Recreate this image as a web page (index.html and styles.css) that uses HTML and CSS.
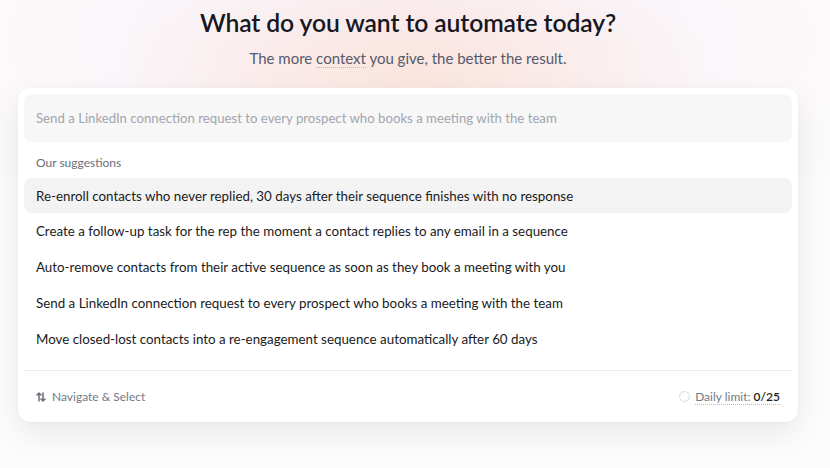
FILE: index.html
```html
<!DOCTYPE html>
<html lang="en">
<head>
	<meta charset="UTF-8">
	<title>Automations</title>
	<link rel="stylesheet" href="styles.css">
</head>
<body>
	<div class="page">
		<header class="hero">
			<h1>What do you want to automate today?</h1>
			<p>The more <span class="dotted">context</span> you give, the better the result.</p>
		</header>

		<section class="box">
			<div class="prompt">Send a LinkedIn connection request to every prospect who books a meeting with the team</div>

			<div class="label">Our suggestions</div>
			<ul class="list">
				<li class="item active">Re-enroll contacts who never replied, 30 days after their sequence finishes with no response</li>
				<li class="item">Create a follow-up task for the rep the moment a contact replies to any email in a sequence</li>
				<li class="item">Auto-remove contacts from their active sequence as soon as they book a meeting with you</li>
				<li class="item">Send a LinkedIn connection request to every prospect who books a meeting with the team</li>
				<li class="item">Move closed-lost contacts into a re-engagement sequence automatically after 60 days</li>
			</ul>

			<footer class="foot">
				<span class="hint">
					<svg width="10" height="10" viewBox="0 0 10 10" fill="none" stroke="currentColor" stroke-width="1.5" stroke-linecap="round" stroke-linejoin="round">
						<path d="M3 9V1M1 3l2-2 2 2"/>
						<path d="M7 1v8M5 7l2 2 2-2"/>
					</svg>
					Navigate &amp; Select
				</span>
				<span class="limit">
					<i class="ring"></i>
					<span class="dotted">Daily limit: <b>0/25</b></span>
				</span>
			</footer>
		</section>
	</div>
</body>
</html>
```

FILE: styles.css
```css
*{padding: 0;margin: 0;}
*,*:after,*:before{box-sizing:border-box;}
html,body{height: 100%;width: 100%;}
body{
	font-family: "Lato", "Liberation Sans", sans-serif;
	color: #1c1d24;
	background: #fcfcfc;
}
.page{
	height: 100%;
	padding: 0 32px 0 18px;
	background:
		radial-gradient(ellipse 300px 120px at 415px 75px, rgba(252,222,208,.65), rgba(252,236,232,0) 100%),
		radial-gradient(ellipse 560px 240px at 410px 40px, rgba(248,238,246,.9), rgba(255,255,255,0) 100%),
		#fcfcfc;
}
.hero{
	text-align: center;
	padding-top: 8px;
}
.hero h1{
	font-size: 24.7px;
	font-weight: 600;
	line-height: 30px;
	color: #16171f;
	letter-spacing: -0.1px;
}
.hero p{
	margin-top: 10px;
	font-size: 15px;
	line-height: 20px;
	color: #565a6a;
}
.dotted{
	border-bottom: 1px dotted #b8bbc4;
}

.box{
	margin-top: 20px;
	width: 780px;
	background: #fff;
	border-radius: 12px;
	box-shadow: 0 12px 32px rgba(0,0,0,.08), 0 1px 3px rgba(0,0,0,.04);
	padding: 6px 6px 0;
}
.prompt{
	height: 48px;
	display: flex;
	align-items: center;
	padding: 0 12px;
	background: #f7f7f8;
	border-radius: 8px;
	font-size: 13.2px;
	color: #a2a5ae;
}
.label{
	padding: 14px 12px 0;
	font-size: 12px;
	line-height: 14px;
	color: #6b6e78;
}
.list{
	list-style: none;
	margin-top: 8px;
	padding-bottom: 13px;
	border-bottom: 1px solid #ececee;
}
.item{
	height: 36px;
	display: flex;
	align-items: center;
	padding: 0 12px;
	border-radius: 8px;
	font-size: 13.35px;
	color: #1a1b22;
}
.item.active{
	height: 35px;
	background: #f3f3f3;
}
.foot{
	height: 51px;
	display: flex;
	align-items: center;
	justify-content: space-between;
	padding: 0 12px;
	font-size: 12px;
	color: #757985;
}
.hint{
	display: flex;
	align-items: center;
	gap: 6px;
}
.hint svg{color: #6b6e78;}
.limit{
	display: flex;
	align-items: center;
	gap: 5px;
}
.ring{
	width: 11px;
	height: 11px;
	border-radius: 50%;
	border: 1px solid #d8dade;
}
.limit b{
	font-weight: 600;
	color: #1c1d24;
}
```
